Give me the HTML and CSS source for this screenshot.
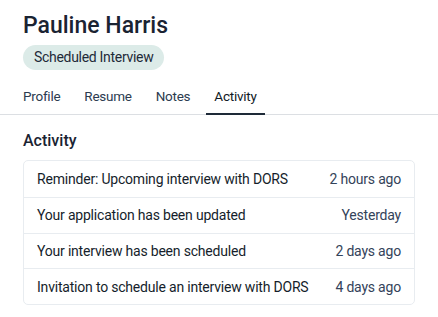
FILE: index.html
```html
<!DOCTYPE html>
<html lang="en">
<head>
    <meta charset="UTF-8">
    <title>Pauline Harris</title>
    <link rel="stylesheet" href="styles.css">
</head>
<body>
    <div class="header">
        <h1 class="name">Pauline Harris</h1>
        <span class="badge">Scheduled Interview</span>
    </div>
    <nav class="tabs">
        <a class="tab">Profile</a>
        <a class="tab">Resume</a>
        <a class="tab">Notes</a>
        <a class="tab active">Activity</a>
    </nav>
    <section class="activity">
        <h2 class="section-title">Activity</h2>
        <ul class="activity-list">
            <li class="activity-item">
                <span class="activity-text">Reminder: Upcoming interview with DORS</span>
                <span class="activity-time">2 hours ago</span>
            </li>
            <li class="activity-item">
                <span class="activity-text">Your application has been updated</span>
                <span class="activity-time">Yesterday</span>
            </li>
            <li class="activity-item">
                <span class="activity-text">Your interview has been scheduled</span>
                <span class="activity-time">2 days ago</span>
            </li>
            <li class="activity-item">
                <span class="activity-text">Invitation to schedule an interview with DORS</span>
                <span class="activity-time">4 days ago</span>
            </li>
        </ul>
    </section>
</body>
</html>
```

FILE: styles.css
```css
body {
    font-family: Roboto, "Noto Sans", sans-serif;
    margin: 0;
    background: #fff;
    color: #1a2332;
}

.header {
    padding: 11px 23px 0;
}
.name {
    font-size: 23px;
    font-weight: 500;
    margin: 0 0 4px;
    line-height: 30px;
}
.badge {
    display: inline-block;
    background: #dcebe8;
    color: #1e2a38;
    font-size: 14px;
    letter-spacing: -0.3px;
    line-height: 25px;
    padding: 0 11px;
    border-radius: 13px;
}

.tabs {
    display: flex;
    gap: 8px;
    padding: 0 15px;
    margin-top: 16px;
    border-bottom: 1px solid #dcdfe3;
}
.tab {
    font-size: 13.5px;
    letter-spacing: -0.25px;
    line-height: 20px;
    color: #2c3b50;
    padding: 0 8px 7px;
}
.tab.active {
    color: #111a26;
    border-bottom: 2px solid #1e2a38;
    margin-bottom: -1px;
}

.activity {
    padding: 0 23px;
}
.section-title {
    font-size: 16px;
    font-weight: 500;
    line-height: 22px;
    margin: 15px 0 8px;
}
.activity-list {
    list-style: none;
    margin: 0;
    padding: 0;
    border: 1px solid #e8ecf0;
    border-radius: 5px;
}
.activity-item {
    box-sizing: border-box;
    display: flex;
    justify-content: space-between;
    align-items: center;
    height: 35.75px;
    padding: 0 13px;
    font-size: 14px;
    letter-spacing: -0.2px;
    border-top: 1px solid #e8ecf0;
}
.activity-item:first-child {
    border-top: none;
}
.activity-text {
    color: #151e2b;
}
.activity-time {
    color: #34435a;
}
```
